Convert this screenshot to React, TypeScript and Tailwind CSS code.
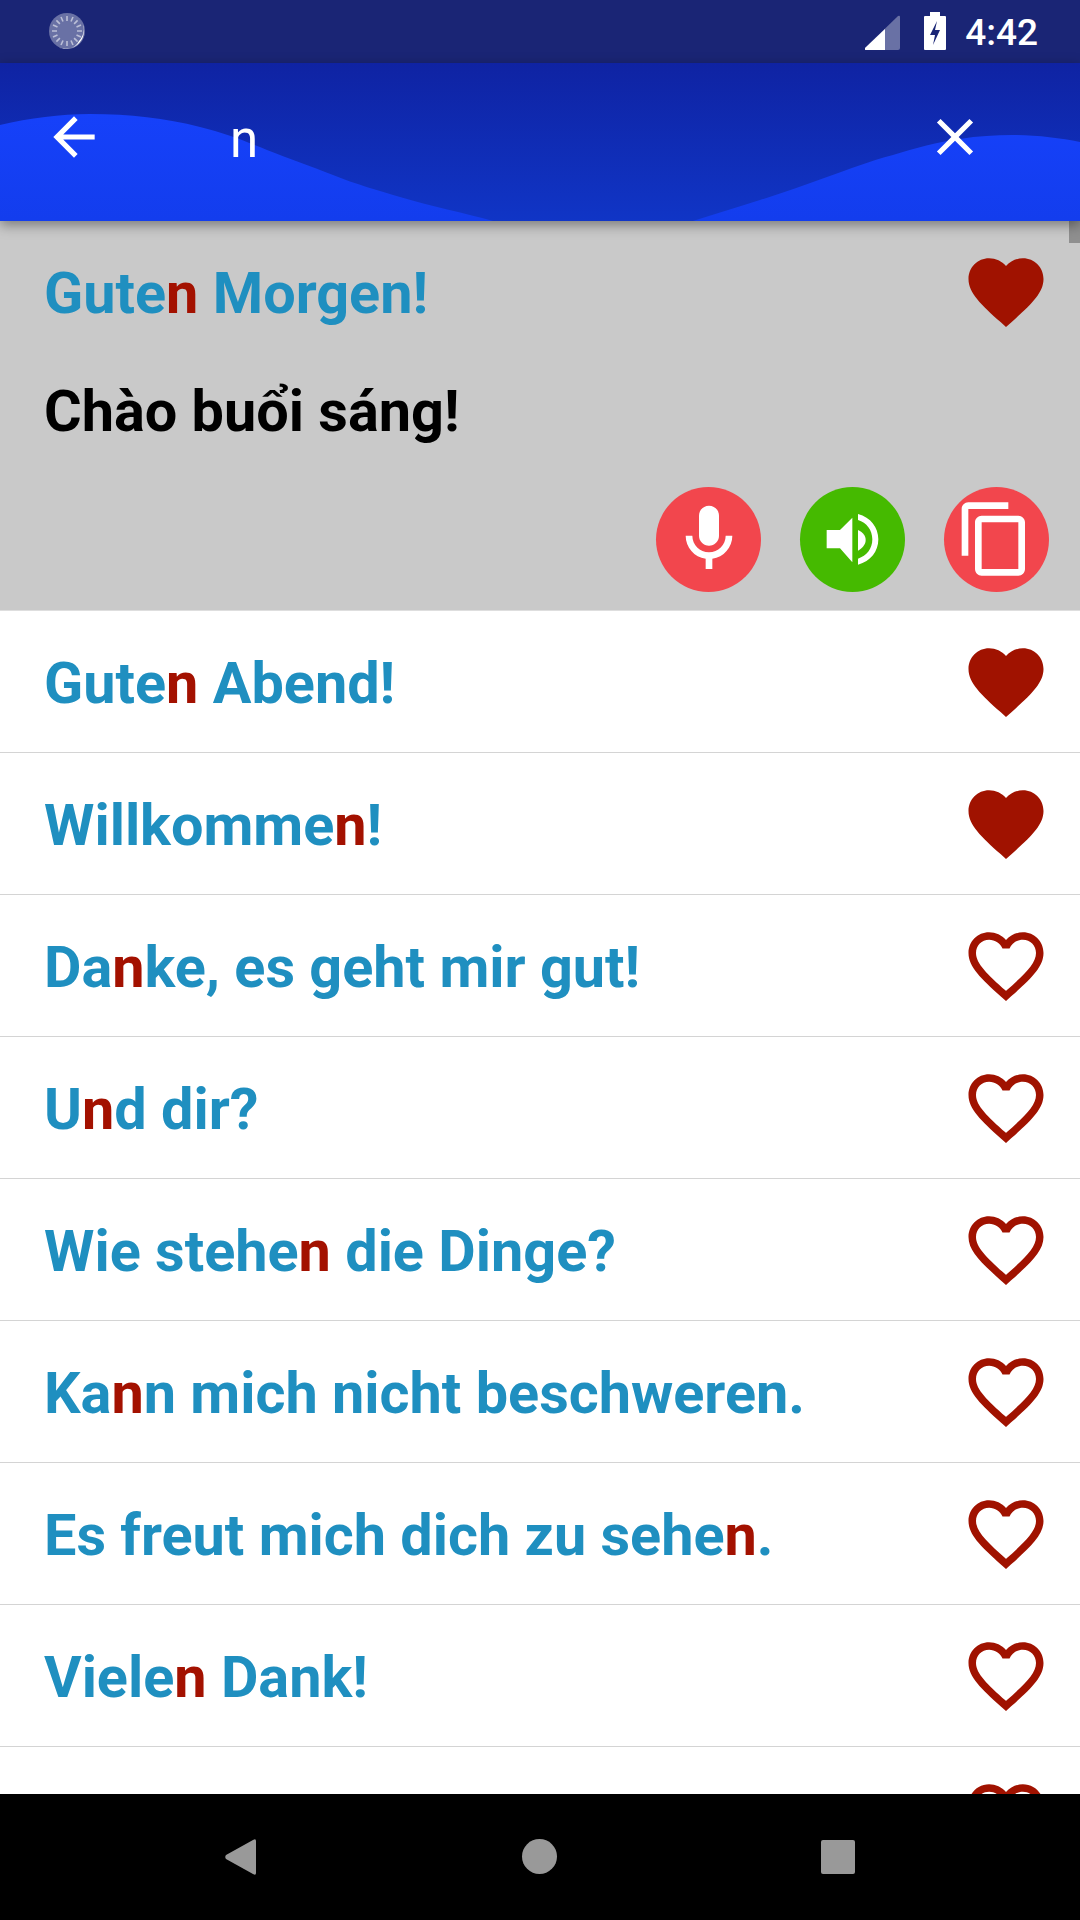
const FAV = "M12 21.35l-1.45-1.32C5.4 15.36 2 12.28 2 8.5 2 5.42 4.42 3 7.5 3c1.74 0 3.41.81 4.5 2.09C13.09 3.81 14.76 3 16.5 3 19.58 3 22 5.42 22 8.5c0 3.78-3.4 6.86-8.55 11.54L12 21.35z";
const FAV_B = "M16.5 3c-1.74 0-3.41.81-4.5 2.09C10.91 3.81 9.24 3 7.5 3 4.42 3 2 5.42 2 8.5c0 3.78 3.4 6.86 8.55 11.54L12 21.35l1.45-1.32C18.6 15.36 22 12.28 22 8.5 22 5.42 19.58 3 16.5 3zm-4.4 15.55l-.1.1-.1-.1C7.14 14.24 4 11.39 4 8.5 4 6.5 5.5 5 7.5 5c1.54 0 3.04.99 3.57 2.36h1.87C13.46 5.99 14.96 5 16.5 5c2 0 3.5 1.5 3.5 3.5 0 2.89-3.14 5.74-7.9 10.05z";

function Heart({ filled }: { filled: boolean }) {
  return (
    <svg viewBox="0 0 24 24" className="w-[90px] h-[90px] shrink-0 fill-[#a01200]">
      <path d={filled ? FAV : FAV_B} />
    </svg>
  );
}

function Title({ parts }: { parts: string[] }) {
  return (
    <span className="pt-[4px] text-[57.6px] font-bold leading-none text-[#1f8fc0] whitespace-nowrap">
      {parts.map((p, i) =>
        i % 2 === 1 ? (
          <span key={i} className="text-[#a31100]">{p}</span>
        ) : (
          <span key={i}>{p}</span>
        )
      )}
    </span>
  );
}

const rows: { parts: string[]; filled: boolean }[] = [
  { parts: ["Gute", "n", " Abend!"], filled: true },
  { parts: ["Willkomme", "n", "!"], filled: true },
  { parts: ["Da", "n", "ke, es geht mir gut!"], filled: false },
  { parts: ["U", "n", "d dir?"], filled: false },
  { parts: ["Wie stehe", "n", " die Dinge?"], filled: false },
  { parts: ["Ka", "n", "n mich nicht beschweren."], filled: false },
  { parts: ["Es freut mich dich zu sehe", "n", "."], filled: false },
  { parts: ["Viele", "n", " Dank!"], filled: false },
  { parts: [""], filled: false },
];

export default function App() {
  return (
    <div className="w-[1080px] h-[1920px] flex flex-col overflow-hidden bg-white font-['Roboto',sans-serif]">
      {/* status bar */}
      <div className="h-[63px] shrink-0 bg-[#1a2575] flex items-center pl-[48px] pr-[42px] text-white">
        <svg viewBox="0 0 38 38" className="w-[38px] h-[38px] mb-[1px]">
          <circle cx="19" cy="19" r="18" fill="#fff" opacity="0.35" />
          <g stroke="#fff" strokeOpacity="0.55" strokeWidth="1.6">
            <path d="M19 4v5M19 29v5M4 19h5M29 19h5M8.4 8.4l3.5 3.5M26.1 26.1l3.5 3.5M8.4 29.6l3.5-3.5M26.1 11.9l3.5-3.5M13 5l2 4.5M23 28.5l2 4.5M5 13l4.5 2M28.5 23l4.5 2M25 5l-2 4.5M15 28.5l-2 4.5M5 25l4.5-2M28.5 15l4.5-2" />
          </g>
          <path d="M33 9a18 18 0 0 1-23 26a15 15 0 0 0 21-6a16 16 0 0 0 2-20z" fill="#fff" />
        </svg>
        <div className="ml-auto flex items-center">
          <svg viewBox="0 0 35 35" className="w-[35px] h-[35px] mt-[2px]">
            <path d="M0 33L33 1q2-1 2 1v31q0 2-2 2H1q-2 0-1-2z" fill="#fff" opacity="0.35" />
            <path d="M0 33L20 14V35H1q-2 0-1-2z" fill="#fff" />
          </svg>
          <svg viewBox="0 0 22 38" className="w-[22px] h-[38px] ml-[24px] mt-[-1px]">
            <path d="M6 0h10v4h5q1 0 1 1v32q0 1-1 1H1q-1 0-1-1V5q0-1 1-1h5z" fill="#fff" />
            <path d="M13 9L6 23h5l-2 10 7-15h-5z" fill="#1a2575" />
          </svg>
          <span className="ml-[19px] mt-[1px] text-[37px] font-medium leading-none">4:42</span>
        </div>
      </div>

      {/* search header */}
      <div className="relative z-10 h-[158px] shrink-0 flex items-center pb-[10px] bg-gradient-to-b from-[#0f23a3] to-[#1035c6] shadow-[0_4px_12px_rgba(0,0,0,0.4)] text-white">
        <svg viewBox="0 0 1080 158" preserveAspectRatio="none" className="absolute inset-0 w-full h-full">
          <defs>
            <linearGradient id="wave" x1="0" y1="0" x2="0" y2="1">
              <stop offset="0" stopColor="#1641fa" />
              <stop offset="1" stopColor="#133ded" />
            </linearGradient>
          </defs>
          <path
            d="M0 62C30 55 60 51 90 51C130 51 165 55 200 64C225 70 245 78 267 87C290 96 310 103 333 112C355 121 380 128 400 134C430 143 465 150 493 158H693C715 151 738 144 760 137C783 130 805 122 827 114C850 106 870 98 893 92C915 85 938 79 960 76C978 73 995 72 1013 72C1037 72 1060 75 1080 79V158H0Z"
            fill="url(#wave)"
          />
        </svg>
        <svg viewBox="0 0 24 24" className="relative w-[62px] h-[62px] ml-[43px] fill-white">
          <path d="M20 11H7.83l5.59-5.59L12 4l-8 8 8 8 1.41-1.41L7.83 13H20v-2z" />
        </svg>
        <span className="relative ml-[125px] mt-[5px] text-[51px] leading-none">n</span>
        <svg viewBox="0 0 24 24" className="relative ml-auto mr-[94px] w-[62px] h-[62px] fill-white">
          <path d="M19 6.41L17.59 5 12 10.59 6.41 5 5 6.41 10.59 12 5 17.59 6.41 19 12 13.41 17.59 19 19 17.59 13.41 12z" />
        </svg>
      </div>

      {/* list */}
      <div className="relative flex-1 min-h-0 overflow-hidden">
        <div className="absolute top-0 right-0 w-[11px] h-[22px] bg-[#8f8f8f]" />

        <div className="h-[390px] box-border border-b border-[#dedede] bg-[#c9c9c9] flex flex-col pl-[44px] pr-[29px]">
          <div className="h-[142px] shrink-0 flex items-center justify-between">
            <Title parts={["Gute", "n", " Morgen!"]} />
            <Heart filled />
          </div>
          <div className="text-[57.6px] font-bold leading-none text-black mt-[20px]">Chào buổi sáng!</div>
          <div className="flex justify-end gap-[39px] mt-[46px] pr-[2px]">
            <div className="w-[105px] h-[105px] rounded-full bg-[#f2464d] flex items-center justify-center">
              <svg viewBox="0 0 24 24" className="w-[80px] h-[80px] fill-white">
                <path d="M12 14c1.66 0 3-1.34 3-3V5c0-1.66-1.34-3-3-3S9 3.34 9 5v6c0 1.66 1.34 3 3 3z" />
                <path d="M17 11c0 2.76-2.24 5-5 5s-5-2.24-5-5H5c0 3.53 2.61 6.43 6 6.92V21h2v-3.08c3.39-.49 6-3.39 6-6.92h-2z" />
              </svg>
            </div>
            <div className="w-[105px] h-[105px] rounded-full bg-[#45ba00] flex items-center justify-center">
              <svg viewBox="540 801 315 315" className="w-[105px] h-[105px] fill-white">
                <path d="M620 930H660L697 893V1027L660 985H620Z" />
                <path d="M714 930C730 938 737 948 737 960C737 972 730 982 714 992Z" />
                <path d="M714 882C752 892 775 922 775 958C775 994 752 1024 714 1034V1016C740 1008 757 986 757 958C757 930 740 908 714 900Z" />
              </svg>
            </div>
            <div className="w-[105px] h-[105px] rounded-full bg-[#f2464d] flex items-center justify-center">
              <svg viewBox="0 0 24 24" className="w-[80px] h-[80px] fill-white -ml-[4px]">
                <path d="M16 1H4c-1.1 0-2 .9-2 2v14h2V3h12V1zm3 4H8c-1.1 0-2 .9-2 2v14c0 1.1.9 2 2 2h11c1.1 0 2-.9 2-2V7c0-1.1-.9-2-2-2zm0 16H8V7h11v14z" />
              </svg>
            </div>
          </div>
        </div>

        {rows.map((r, i) => (
          <div
            key={i}
            className="h-[142px] box-border border-b border-[#d4d4d4] flex items-center justify-between pl-[44px] pr-[29px]"
          >
            <Title parts={r.parts} />
            <Heart filled={r.filled} />
          </div>
        ))}
      </div>

      {/* nav bar */}
      <div className="h-[126px] shrink-0 bg-black flex items-center relative">
        <svg viewBox="0 0 31 36" className="absolute left-[225px] top-[45px] w-[31px] h-[36px] fill-[#999]">
          <path d="M1 20q-1.5-2 0-4L28 1q3-2 3 1v32q0 3-3 1z" />
        </svg>
        <div className="absolute left-[522px] top-[45px] w-[35px] h-[35px] rounded-full bg-[#999]" />
        <div className="absolute left-[821px] top-[46px] w-[34px] h-[34px] rounded-[2px] bg-[#999]" />
      </div>
    </div>
  );
}
